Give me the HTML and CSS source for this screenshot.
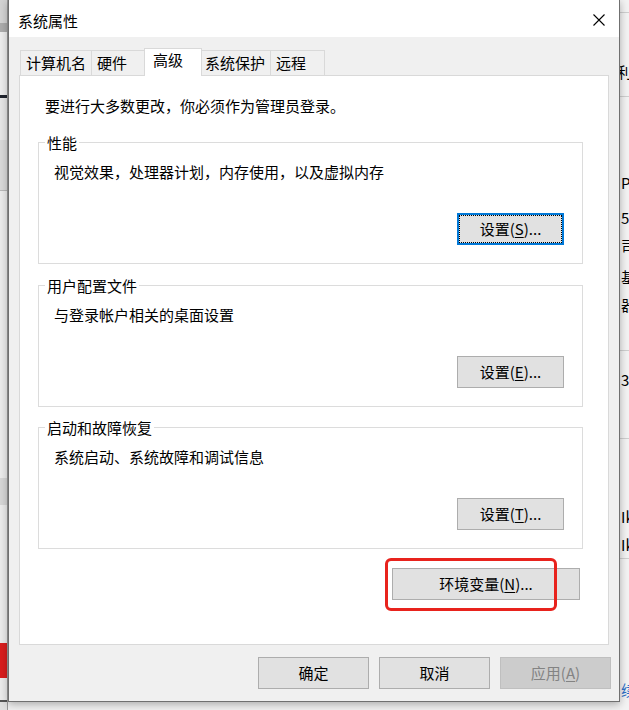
FILE: index.html
```html
<!DOCTYPE html>
<html lang="zh-CN">

<head>
    <meta charset="UTF-8">
    <title>系统属性</title>
    <link rel="stylesheet" href="styles.css">
</head>

<body>
    <div class="desk">
        <!-- window behind, left edge -->
        <div class="behind-left"></div>

        <div class="dialog">
            <div class="titlebar">
                <span class="title">系统属性</span>
                <svg class="close" width="12" height="12" viewBox="0 0 12 12">
                    <path d="M0.5 0.5L11.5 11.5M11.5 0.5L0.5 11.5" stroke="#000" stroke-width="1.1" fill="none" />
                </svg>
            </div>

            <div class="tabs">
                <div class="tab">计算机名</div>
                <div class="tab">硬件</div>
                <div class="tab active">高级</div>
                <div class="tab">系统保护</div>
                <div class="tab">远程</div>
            </div>

            <div class="panel">
                <p class="notice">要进行大多数更改，你必须作为管理员登录。</p>

                <div class="group">
                    <span class="group-label">性能</span>
                    <p class="group-desc">视觉效果，处理器计划，内存使用，以及虚拟内存</p>
                    <div class="group-actions">
                        <button class="btn btn-settings focused">设置(<u>S</u>)...</button>
                    </div>
                </div>

                <div class="group">
                    <span class="group-label">用户配置文件</span>
                    <p class="group-desc">与登录帐户相关的桌面设置</p>
                    <div class="group-actions">
                        <button class="btn btn-settings">设置(<u>E</u>)...</button>
                    </div>
                </div>

                <div class="group">
                    <span class="group-label">启动和故障恢复</span>
                    <p class="group-desc">系统启动、系统故障和调试信息</p>
                    <div class="group-actions">
                        <button class="btn btn-settings">设置(<u>T</u>)...</button>
                    </div>
                </div>

                <div class="env-wrap">
                    <button class="btn btn-env">环境变量(<u>N</u>)...</button>
                    <span class="highlight"></span>
                </div>
            </div>

            <div class="footer">
                <button class="btn btn-footer">确定</button>
                <button class="btn btn-footer">取消</button>
                <button class="btn btn-footer" disabled>应用(<u>A</u>)</button>
            </div>
        </div>

        <!-- window behind, right edge -->
        <div class="behind-right">
            <div class="peek">利</div>
            <div class="peek">P</div>
            <div class="peek">50</div>
            <div class="peek">司</div>
            <div class="peek">基</div>
            <div class="peek">器</div>
            <div class="peek">30</div>
            <div class="peek">Ik</div>
            <div class="peek">Ik</div>
            <div class="peek link">续</div>
        </div>
    </div>
</body>

</html>
```

FILE: styles.css
```css
body {
    margin: 0;
    font-family: "Noto Sans CJK SC", "Noto Sans", sans-serif;
    font-size: 15px;
    line-height: 20px;
    color: #000;
    background-color: #f0f0f0;
}

p {
    margin: 0;
}

.desk {
    display: flex;
    height: 710px;
    overflow: hidden;
}

/* background windows */
.behind-left {
    width: 8px;
    flex: none;
    box-shadow: inset -1px 0 #9a9a9a;
    background: linear-gradient(to bottom,
            #d3d3d3 0 23px, #acacac 23px 32px, #ededed 32px 95px,
            #20242e 95px 98px, #e6e6e6 98px 140px, #d9d9d9 140px 190px,
            #b8b8b8 190px 191px, #ebebeb 191px 478px, #d6d6d6 478px 505px,
            #ebebeb 505px 643px, #d81e1e 643px 678px, #ebebeb 678px 700px,
            #555 700px 702px, #e0e0e0 702px);
}

.behind-right {
    flex: 1;
    display: flex;
    flex-direction: column;
    padding-left: 1px;
    overflow: hidden;
    white-space: nowrap;
    background: linear-gradient(to bottom,
            #f3f3f3 0 12px, #cfcfcf 12px 13px, #f3f3f3 13px 96px,
            #cfcfcf 96px 97px, #f3f3f3 97px 350px, #cfcfcf 350px 351px,
            #f3f3f3 351px 438px, #cfcfcf 438px 439px, #f3f3f3 439px 558px,
            #cfcfcf 558px 559px, #f3f3f3 559px);
}

.peek {
    height: 20px;
    flex: none;
}

.peek:nth-child(1) { margin-top: 62px; margin-left: -4px; }
.peek:nth-child(2) { margin-top: 91px; }
.peek:nth-child(3) { margin-top: 15px; }
.peek:nth-child(4) { margin-top: 8px; }
.peek:nth-child(5) { margin-top: 11px; }
.peek:nth-child(6) { margin-top: 8px; }
.peek:nth-child(7) { margin-top: 55px; }
.peek:nth-child(8) { margin-top: 117px; }
.peek:nth-child(9) { margin-top: 8px; }
.peek:nth-child(10) { margin-top: 125px; }

.peek.link {
    color: #2a6fc9;
}

/* dialog */
.dialog {
    width: 612px;
    height: 702px;
    flex: none;
    box-sizing: border-box;
    border: 1px solid #707070;
    border-top: none;
    background-color: #f0f0f0;
    display: flex;
    flex-direction: column;
    position: relative;
    z-index: 1;
    box-shadow: 0 2px 8px rgba(0, 0, 0, 0.3);
}

.titlebar {
    height: 37px;
    flex: none;
    background-color: white;
    display: flex;
    align-items: center;
    justify-content: space-between;
    padding: 2px 14px 0 9px;
    box-sizing: border-box;
}

.title {
    padding-top: 2px;
}

.tabs {
    height: 38px;
    flex: none;
    display: flex;
    align-items: flex-end;
    margin: 0 10px;
    padding-left: 1px;
}

.tab {
    height: 25px;
    min-width: 55px;
    box-sizing: border-box;
    padding: 0 5px;
    border: 1px solid #d9d9d9;
    border-bottom: none;
    margin-right: -1px;
    line-height: 24px;
    background-color: #f0f0f0;
}

.tab.active {
    height: 28px;
    min-width: 58px;
    padding: 0 8px;
    margin: 0 -3px -1px -1px;
    line-height: 22px;
    background-color: white;
    position: relative;
    z-index: 1;
}

.panel {
    height: 570px;
    flex: none;
    margin: 0 10px;
    box-sizing: border-box;
    border: 1px solid #d9d9d9;
    background-color: white;
    padding: 20px 25px 0 18px;
    display: flex;
    flex-direction: column;
}

.notice {
    margin: 0 0 26px 7px;
}

.group {
    border: 1px solid #dcdcdc;
    padding: 0 18px 18px 15px;
    margin-bottom: 21px;
    display: flex;
    flex-direction: column;
}

.group:nth-of-type(2) {
    margin-bottom: 20px;
}

.group:nth-of-type(3) {
    margin-bottom: 19px;
}

.group-label {
    align-self: flex-start;
    margin: -10px 0 0 -9px;
    padding: 0 2px;
    background-color: white;
}

.group-desc {
    margin-top: 9px;
}

.group-actions {
    display: flex;
    justify-content: flex-end;
    margin-top: 31px;
}

.btn {
    height: 32px;
    box-sizing: border-box;
    padding: 0;
    font: inherit;
    color: #000;
    background-color: #e1e1e1;
    border: 1px solid #adadad;
}

.btn u {
    text-underline-offset: 2px;
}

.btn-settings {
    width: 107px;
}

.btn.focused {
    border: 2px solid #0078d7;
    outline: 1px dotted #000;
    outline-offset: -3px;
}

.env-wrap {
    align-self: flex-end;
    margin-right: 3px;
    position: relative;
}

.btn-env {
    width: 188px;
    display: block;
}

/* red annotation drawn over the screenshot */
.highlight {
    position: absolute;
    left: -7px;
    top: -10px;
    width: 172px;
    height: 53px;
    box-sizing: border-box;
    border: 3px solid #e8231d;
    border-radius: 6px;
}

.footer {
    flex: 1;
    display: flex;
    justify-content: flex-end;
    align-items: flex-start;
    gap: 10px;
    padding: 12px 8px 0 0;
}

.btn-footer {
    width: 111px;
}

.btn-footer:disabled {
    background-color: #cccccc;
    border-color: #bfbfbf;
    color: #838383;
}
```
